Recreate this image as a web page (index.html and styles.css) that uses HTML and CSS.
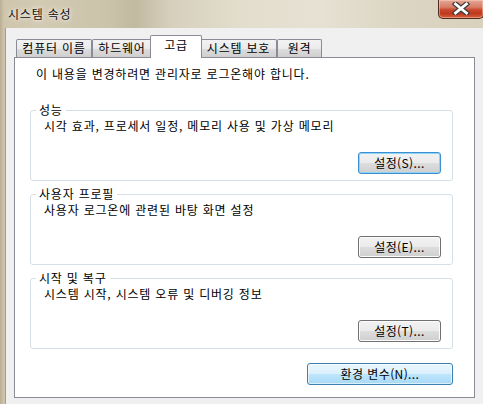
FILE: index.html
```html
<!DOCTYPE html>
<html lang="ko">
<head>
<meta charset="utf-8">
<title>시스템 속성</title>
<link rel="stylesheet" href="styles.css">
</head>
<body>
<div class="window">
  <div class="titlebar">
    <span class="title">시스템 속성</span>
    <div class="close" aria-label="닫기">
      <svg width="18" height="13" viewBox="0 0 18 13">
        <path d="M3.5 2 L14.5 11 M14.5 2 L3.5 11" stroke="#3a3a3a" stroke-width="5.2" stroke-linecap="square" fill="none"/>
        <path d="M3.5 2 L14.5 11 M14.5 2 L3.5 11" stroke="#ffffff" stroke-width="2.8" stroke-linecap="square" fill="none"/>
      </svg>
    </div>
  </div>
  <div class="client">
    <div class="tabs">
      <div class="tab tab-name">컴퓨터 이름</div>
      <div class="tab tab-hw">하드웨어</div>
      <div class="tab tab-active">고급</div>
      <div class="tab tab-protect">시스템 보호</div>
      <div class="tab tab-remote">원격</div>
    </div>
    <div class="panel">
      <p class="note">이 내용을 변경하려면 관리자로 로그온해야 합니다.</p>
      <fieldset class="group">
        <legend>성능</legend>
        <p class="desc">시각 효과, 프로세서 일정, 메모리 사용 및 가상 메모리</p>
        <div class="btn btn-focus">설정(S)...</div>
      </fieldset>
      <fieldset class="group">
        <legend>사용자 프로필</legend>
        <p class="desc">사용자 로그온에 관련된 바탕 화면 설정</p>
        <div class="btn">설정(E)...</div>
      </fieldset>
      <fieldset class="group">
        <legend>시작 및 복구</legend>
        <p class="desc">시스템 시작, 시스템 오류 및 디버깅 정보</p>
        <div class="btn">설정(T)...</div>
      </fieldset>
      <div class="btn btn-env">환경 변수(N)...</div>
    </div>
  </div>
</div>
</body>
</html>
```

FILE: styles.css
```css
* { box-sizing: border-box; }
html, body { margin: 0; padding: 0; }
body {
  font-family: "Noto Sans CJK KR", "Noto Sans", sans-serif;
  font-size: 12px;
  letter-spacing: 0.8px;
  color: #000;
  background: #d9d2c0;
}
.window {
  width: 483px;
  height: 404px;
  overflow: hidden;
  display: flex;
  flex-direction: column;
  background: linear-gradient(90deg, #b9ae93 0px, #cfc5ad 4px, #d3cab3 40px, #cbc2aa 110px, #c2b9a1 135px, #d6cfbc 170px, #e3ddcd 240px, #e6e1d3 320px, #dcd5c3 400px, #d8d1bd 483px);
}
.titlebar {
  height: 28px;
  flex: none;
  display: flex;
  justify-content: space-between;
  align-items: flex-start;
}
.title {
  margin: 7px 0 0 8px;
  line-height: 14px;
  color: #111;
  text-shadow: 0 0 6px rgba(255,255,255,0.9), 0 0 3px rgba(255,255,255,0.8);
}
.close {
  width: 46px;
  height: 19px;
  margin-right: -1px;
  border: 1px solid #4e2a20;
  border-top: none;
  border-radius: 0 0 5px 5px;
  background: linear-gradient(180deg, #e3a796 0%, #d77c65 40%, #c8472c 55%, #c0391d 75%, #d4603f 100%);
  box-shadow: inset 0 0 0 1px rgba(255,220,200,0.45);
  display: flex;
  align-items: center;
  justify-content: center;
  padding-bottom: 1px;
}
.client {
  flex: 1;
  margin-left: 5px;
  border-left: 1px solid #a19c8f;
  background: #f0f0f0;
  padding: 7px 8px 6px 8px;
  display: flex;
  flex-direction: column;
}
.tabs {
  height: 22px;
  flex: none;
  display: flex;
  align-items: flex-end;
  margin-left: 2px;
}
.tab {
  height: 18px;
  border: 1px solid #898c95;
  border-bottom: none;
  border-radius: 2px 2px 0 0;
  background: linear-gradient(180deg, #f2f2f2 0%, #ebebeb 50%, #dddddd 51%, #cfcfcf 100%);
  line-height: 15px;
  text-align: center;
  white-space: nowrap;
}
.tab-name { width: 76px; }
.tab-hw { width: 60px; }
.tab-protect { width: 77px; }
.tab-remote { width: 45px; }
.tab-active {
  width: 52px;
  height: 23px;
  margin: 0 -2px -1px -2px;
  padding-top: 1px;
  background: #fff;
  position: relative;
  z-index: 2;
}
.panel {
  flex: 1;
  background: #fff;
  border: 1px solid #898c95;
  padding: 9px 21px 0 15px;
  display: flex;
  flex-direction: column;
}
.note {
  margin: 0 0 22px 6px;
  line-height: 14px;
}
.group {
  margin: 0 0 6px 0;
  padding: 0 11px 6px 5px;
  border: 1px solid #d5dfe5;
  border-radius: 3px;
  min-width: 0;
}
.group legend {
  padding: 0 3px;
  line-height: 14px;
}
.desc {
  margin: 2px 0 19px 8px;
  line-height: 14px;
}
.btn {
  width: 83px;
  height: 22px;
  margin-left: auto;
  border: 1px solid #707070;
  border-radius: 3px;
  background: linear-gradient(180deg, #f2f2f2 0%, #ebebeb 50%, #dddddd 51%, #cfcfcf 100%);
  box-shadow: inset 0 0 0 1px #fcfcfc;
  text-align: center;
  line-height: 19px;
  letter-spacing: 0.4px;
  white-space: nowrap;
}
.btn-focus {
  border-color: #3c8fd0;
  box-shadow: inset 0 0 0 1px #8fd3f5;
}
.btn-env {
  width: 146px;
  margin-top: 8px;
  border-color: #3c7fb1;
  background: linear-gradient(180deg, #eaf6fd 0%, #d9f0fc 50%, #bee6fd 51%, #a7d9f5 100%);
  box-shadow: inset 0 0 0 1px rgba(255,255,255,0.6);
}
```
